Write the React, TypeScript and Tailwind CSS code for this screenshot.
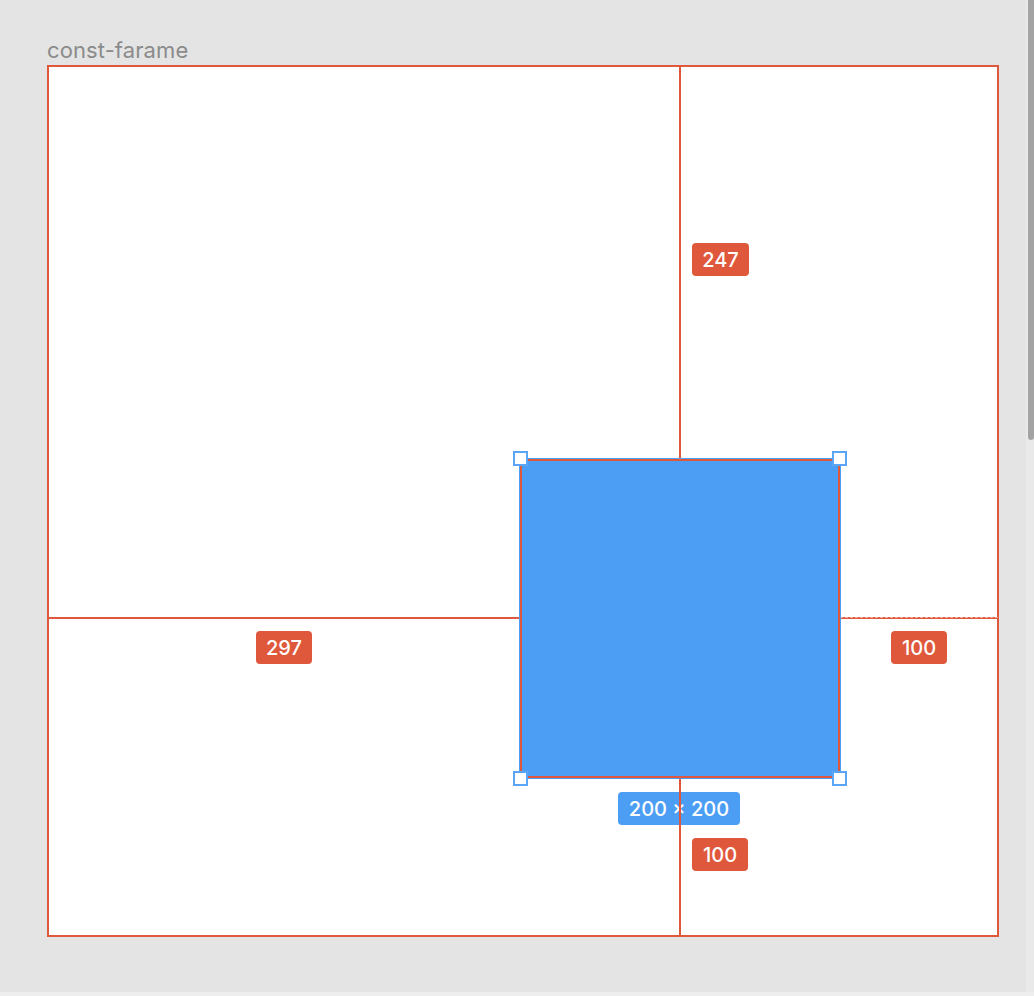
import React from 'react';

const RED = 'bg-[#e0583b]';

function Badge({ x, y, w, label, blue }: { x: string; y: string; w: string; label: string; blue?: boolean }) {
  return (
    <div
      className={`absolute ${x} ${y} ${w} h-[33px] rounded-[4px] flex items-center justify-center text-white text-[20px] font-medium leading-none ${
        blue ? 'bg-[#4c9ef5]' : RED
      }`}
    >
      {label}
    </div>
  );
}

function Handle({ x, y }: { x: string; y: string }) {
  return <div className={`absolute ${x} ${y} w-[15px] h-[15px] bg-white border-2 border-[#5aa5f5]`} />;
}

export default function App() {
  return (
    <div
      className="relative w-[1034px] h-[996px] bg-[#e4e4e4] overflow-hidden"
      style={{ fontFamily: 'Inter, "Noto Sans", sans-serif' }}
    >
      {/* frame + title */}
      <div className="pl-[47px] pt-[36px]">
        <div className="text-[22px] leading-[29px] text-[#8b8b8b] tracking-[0.1px]">const-farame</div>
        <div className="w-[952px] h-[872px] bg-white border-2 border-[#e0583b]" />
      </div>

      {/* measurement guides */}
      <div className={`absolute left-[679px] top-[66px] w-[2px] h-[870px] ${RED}`} />
      <div className={`absolute left-[47px] top-[617px] w-[952px] h-[2px] ${RED}`} />
      <div className="absolute left-[840px] top-[617px] w-[158px] h-0 border-t border-dashed border-white/50" />

      {/* selected square */}
      <div className="absolute left-[519px] top-[458px] w-[322px] h-[321px] border border-[#4c9ef5]">
        <div className="w-full h-full border-2 border-[#e0583b] bg-[#4c9ef5]" />
      </div>
      <Handle x="left-[513px]" y="top-[451px]" />
      <Handle x="left-[832px]" y="top-[451px]" />
      <Handle x="left-[513px]" y="top-[771px]" />
      <Handle x="left-[832px]" y="top-[771px]" />

      {/* size + distances */}
      <Badge x="left-[618px]" y="top-[792px]" w="w-[122px]" label="200 × 200" blue />
      <div className={`absolute left-[679px] top-[792px] w-[2px] h-[34px] ${RED}`} />
      <Badge x="left-[692px]" y="top-[243px]" w="w-[57px]" label="247" />
      <Badge x="left-[256px]" y="top-[631px]" w="w-[56px]" label="297" />
      <Badge x="left-[891px]" y="top-[631px]" w="w-[56px]" label="100" />
      <Badge x="left-[692px]" y="top-[838px]" w="w-[56px]" label="100" />

      {/* scrollbar */}
      <div className="absolute right-0 top-0 w-[8px] h-[992px] bg-[#e9e9e9]" />
      <div className="absolute right-0 top-0 w-[6px] h-[440px] rounded-b-[3px] bg-[#a3a3a3]" />

      {/* bottom strip */}
      <div className="absolute left-0 bottom-0 w-full h-[4px] bg-[#eeeeee]" />
    </div>
  );
}
